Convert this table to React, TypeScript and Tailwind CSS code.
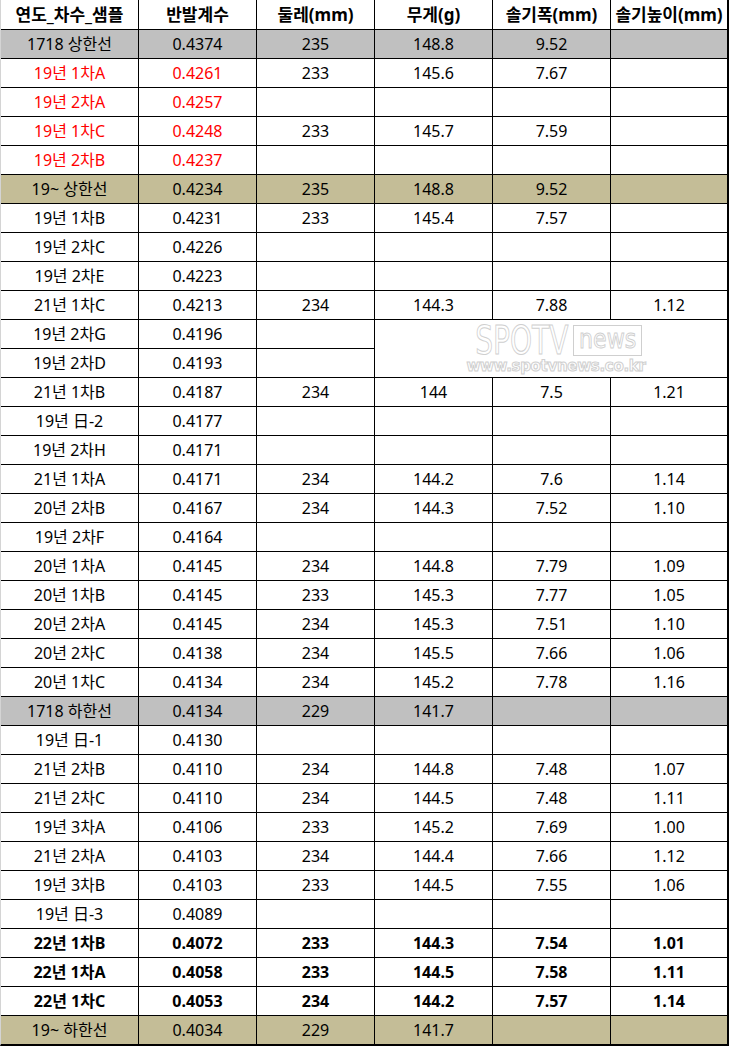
import React from "react";

type Row = {
  cells: string[];
  tone?: "gray" | "tan";
  red?: boolean;
  bold?: boolean;
  merged?: "top" | "bottom";
};

const headers = ["연도_차수_샘플", "반발계수", "둘레(mm)", "무게(g)", "솔기폭(mm)", "솔기높이(mm)"];

const rows: Row[] = [
  { cells: ["1718 상한선", "0.4374", "235", "148.8", "9.52", ""], tone: "gray" },
  { cells: ["19년 1차A", "0.4261", "233", "145.6", "7.67", ""], red: true },
  { cells: ["19년 2차A", "0.4257", "", "", "", ""], red: true },
  { cells: ["19년 1차C", "0.4248", "233", "145.7", "7.59", ""], red: true },
  { cells: ["19년 2차B", "0.4237", "", "", "", ""], red: true },
  { cells: ["19~ 상한선", "0.4234", "235", "148.8", "9.52", ""], tone: "tan" },
  { cells: ["19년 1차B", "0.4231", "233", "145.4", "7.57", ""] },
  { cells: ["19년 2차C", "0.4226", "", "", "", ""] },
  { cells: ["19년 2차E", "0.4223", "", "", "", ""] },
  { cells: ["21년 1차C", "0.4213", "234", "144.3", "7.88", "1.12"] },
  { cells: ["19년 2차G", "0.4196", ""], merged: "top" },
  { cells: ["19년 2차D", "0.4193", ""], merged: "bottom" },
  { cells: ["21년 1차B", "0.4187", "234", "144", "7.5", "1.21"] },
  { cells: ["19년 日-2", "0.4177", "", "", "", ""] },
  { cells: ["19년 2차H", "0.4171", "", "", "", ""] },
  { cells: ["21년 1차A", "0.4171", "234", "144.2", "7.6", "1.14"] },
  { cells: ["20년 2차B", "0.4167", "234", "144.3", "7.52", "1.10"] },
  { cells: ["19년 2차F", "0.4164", "", "", "", ""] },
  { cells: ["20년 1차A", "0.4145", "234", "144.8", "7.79", "1.09"] },
  { cells: ["20년 1차B", "0.4145", "233", "145.3", "7.77", "1.05"] },
  { cells: ["20년 2차A", "0.4145", "234", "145.3", "7.51", "1.10"] },
  { cells: ["20년 2차C", "0.4138", "234", "145.5", "7.66", "1.06"] },
  { cells: ["20년 1차C", "0.4134", "234", "145.2", "7.78", "1.16"] },
  { cells: ["1718 하한선", "0.4134", "229", "141.7", "", ""], tone: "gray" },
  { cells: ["19년 日-1", "0.4130", "", "", "", ""] },
  { cells: ["21년 2차B", "0.4110", "234", "144.8", "7.48", "1.07"] },
  { cells: ["21년 2차C", "0.4110", "234", "144.5", "7.48", "1.11"] },
  { cells: ["19년 3차A", "0.4106", "233", "145.2", "7.69", "1.00"] },
  { cells: ["21년 2차A", "0.4103", "234", "144.4", "7.66", "1.12"] },
  { cells: ["19년 3차B", "0.4103", "233", "144.5", "7.55", "1.06"] },
  { cells: ["19년 日-3", "0.4089", "", "", "", ""] },
  { cells: ["22년 1차B", "0.4072", "233", "144.3", "7.54", "1.01"], bold: true },
  { cells: ["22년 1차A", "0.4058", "233", "144.5", "7.58", "1.11"], bold: true },
  { cells: ["22년 1차C", "0.4053", "234", "144.2", "7.57", "1.14"], bold: true },
  { cells: ["19~ 하한선", "0.4034", "229", "141.7", "", ""], tone: "tan" },
];

// outline text used by the watermark
const outline = "text-transparent [-webkit-text-stroke:1px_#cfcfcf]";

const Watermark = () => (
  <div className="flex flex-col w-[172px] select-none">
    <div className="flex h-[31px]">
      <div className="w-[103px] h-[31px] flex items-center justify-center">
        <span className={`${outline} font-['DejaVu_Sans'] text-[39px] leading-[31px] inline-block scale-x-[0.72]`}>
          SPOTV
        </span>
      </div>
      <div className="w-[69px] h-[31px] border border-[#cfcfcf] flex items-center justify-center">
        <span className={`${outline} font-['DejaVu_Sans'] text-[26px] leading-[24px] inline-block scale-x-[0.85] -mt-[3px]`}>
          news
        </span>
      </div>
    </div>
    <div className="h-[18px] mt-[2px] flex items-center justify-center">
      <span className={`${outline} font-['DejaVu_Sans'] font-bold text-[15px] leading-none tracking-[-0.3px]`}>
        www.spotvnews.co.kr
      </span>
    </div>
  </div>
);

export default function App() {
  const last = rows.length - 1;
  return (
    <div className="w-[729px] bg-white font-['Noto_Sans','Noto_Sans_CJK_KR',sans-serif] text-black">
      <div className="grid grid-cols-[138px_118px_118px_118px_118px_116px] border-l border-l-[#d4d4d4] border-r-2 border-r-black border-b-2 border-b-black">
        {headers.map((h, i) => (
          <div
            key={h}
            className={`h-[30px] flex items-center justify-center border-b border-black text-[17px] font-bold ${i < 5 ? "border-r" : ""}`}
          >
            {h}
          </div>
        ))}

        {rows.map((row, r) => {
          const bg = row.tone === "gray" ? "bg-[#c0c0c0]" : row.tone === "tan" ? "bg-[#c4bd97]" : "bg-white";
          const isLast = r === last;
          return (
            <React.Fragment key={r}>
              {row.cells.map((c, i) => (
                <div
                  key={i}
                  className={`flex items-center justify-center text-[16px] ${bg} ${isLast ? "h-[28px]" : "h-[29px] border-b"} ${i < 5 ? "border-r" : ""} border-black ${row.red && i < 2 ? "text-[#ff0000]" : ""} ${row.bold ? "font-bold" : ""}`}
                >
                  {c}
                </div>
              ))}
              {row.merged === "top" && (
                <div className="col-span-3 row-span-2 border-b border-black flex items-center justify-start bg-white pl-[95px] pt-[3px]">
                  <Watermark />
                </div>
              )}
            </React.Fragment>
          );
        })}
      </div>
    </div>
  );
}
